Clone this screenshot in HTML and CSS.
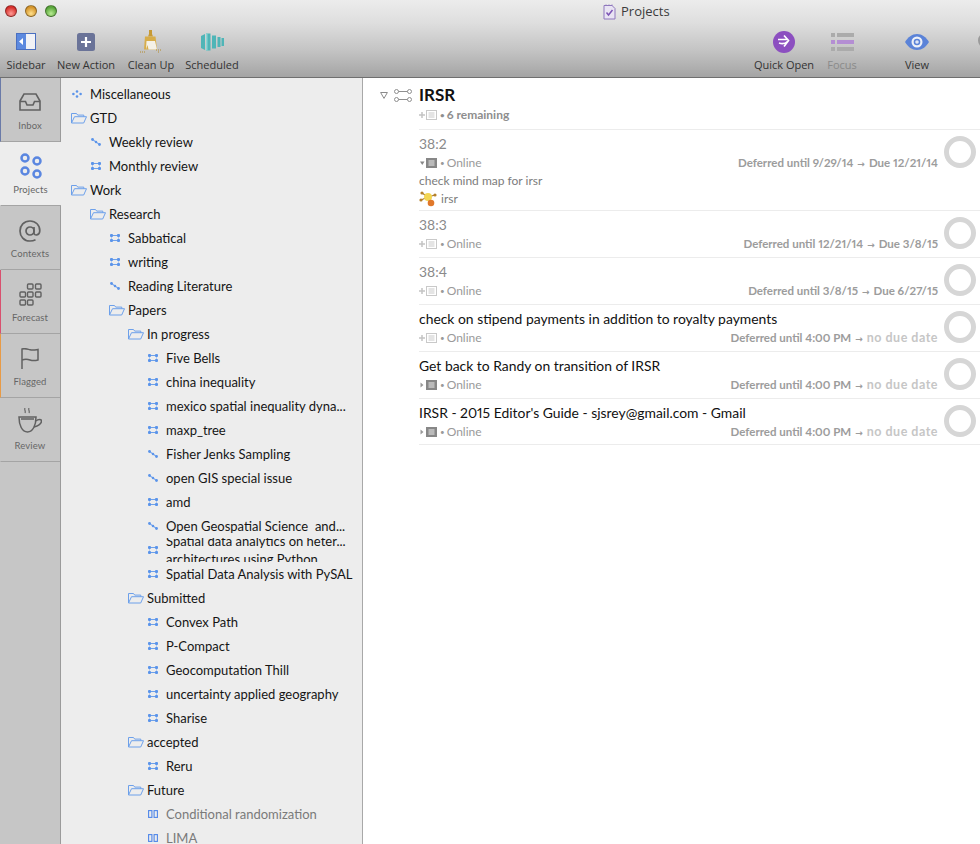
FILE: index.html
```html
<!DOCTYPE html>
<html lang="en">
<head>
<meta charset="utf-8">
<title>Projects</title>
<link rel="stylesheet" href="styles.css">
</head>
<body>
<svg class="defs" width="0" height="0" aria-hidden="true">
  <symbol id="folder" viewBox="0 0 16 12"><path d="M.5 11V1.500h5l1.200 1.600h6.100v1.600M.5 11l3-6.300h12L12.700 11z" fill="none" stroke="#6da0ea" stroke-width="1"/></symbol>
  <symbol id="par" viewBox="0 0 10 8"><path d="M3 1.500h4M3 6.500h4" stroke="#6da0ea" stroke-width="1.200"/><path d="M1.500 2.500v3M8.500 2.500v3" stroke="#a9c6f2" stroke-width=".9"/><g fill="#5b94ea"><rect x="0" y="0" width="3" height="3" rx="1"/><rect x="7" y="0" width="3" height="3" rx="1"/><rect x="0" y="5" width="3" height="3" rx="1"/><rect x="7" y="5" width="3" height="3" rx="1"/></g></symbol>
  <symbol id="seq" viewBox="0 0 10 8"><path d="M1.500 1.500l7 5" stroke="#7fabee" stroke-width="1.200"/><g fill="#5b94ea"><circle cx="1.500" cy="1.500" r="1.400"/><circle cx="5" cy="4" r="1.200"/><circle cx="8.500" cy="6.500" r="1.400"/></g></symbol>
  <symbol id="misc" viewBox="0 0 10 8"><g fill="#5b94ea"><circle cx="1.400" cy="4" r="1.300"/><circle cx="5" cy="1.500" r="1.300"/><circle cx="5" cy="6.500" r="1.300"/><circle cx="8.600" cy="4" r="1.300"/></g></symbol>
  <symbol id="drop" viewBox="0 0 10 8"><rect x=".6" y=".6" width="3.300" height="6.800" fill="none" stroke="#4f86e8" stroke-width="1.100"/><rect x="6.100" y=".6" width="3.300" height="6.800" fill="none" stroke="#4f86e8" stroke-width="1.100"/></symbol>
  <symbol id="note-off" viewBox="0 0 18 10"><path d="M0 5h6M3 2v6" stroke="#c4c4c4" stroke-width="1.500"/><rect x="7.500" y=".5" width="10" height="9" fill="#fff" stroke="#c9c9c9"/><path d="M9.500 3h6M9.500 5h6M9.500 7h6" stroke="#c9c9c9"/></symbol>
  <symbol id="note-open" viewBox="0 0 18 10"><path d="M1 3.500h4.500L3.250 7z" fill="#888"/><rect x="7" width="11" height="10" fill="#878787"/><path d="M9.500 3h6M9.500 5h6M9.500 7h6" stroke="#eee"/></symbol>
  <symbol id="note-closed" viewBox="0 0 18 10"><path d="M1.500 2.500L4.500 5l-3 2.500z" fill="#999"/><rect x="7" width="11" height="10" fill="#878787"/><path d="M9.500 3h6M9.500 5h6M9.500 7h6" stroke="#eee"/></symbol>
</svg>

<header class="chrome">
  <div class="titlebar">
    <div class="lights">
      <span class="light red"></span><span class="light amber"></span><span class="light green"></span>
    </div>
    <div class="wintitle">
      <svg class="doc" width="13" height="16" viewBox="0 0 13 16"><path d="M1 1.500h8l3 3V15H1z" fill="#e9e4f3" stroke="#8f78bd"/><path d="M3 2V.5M6 2V.5M9 2V.5" stroke="#8f78bd"/><path d="M3.500 8.500l2 2.500 4-5" fill="none" stroke="#7d55b5" stroke-width="1.500"/></svg>
      <span>Projects</span>
    </div>
  </div>
  <div class="toolbar">
    <div class="tool w-sidebar">
      <svg width="20" height="17" viewBox="0 0 20 17"><rect x=".5" y=".5" width="19" height="16" fill="#f1f2f6" stroke="#4a6fc0"/><rect x="1" y="1" width="9" height="15" fill="#5c89df"/><path d="M7 5v7L3 8.500z" fill="#fff"/></svg>
      <span>Sidebar</span>
    </div>
    <div class="tool w-new">
      <svg width="18" height="18" viewBox="0 0 18 18"><rect width="18" height="18" rx="2.500" fill="#6a7398"/><path d="M9 4v10M4 9h10" stroke="#fff" stroke-width="2.200"/></svg>
      <span>New Action</span>
    </div>
    <div class="tool w-clean">
      <svg width="22" height="23" viewBox="0 0 22 23"><path d="M9 0h3v4l1 2.500H8l1-2.500z" fill="#c79a34"/><path d="M5 6.500h10.500l1.500 13H4z" fill="#d7ad4a"/><path d="M6.500 11h8.500l2 8.500H8.500L7.500 15 6 19.500z" fill="#f4f1e7"/><path d="M0 22h6M16 20h6M18 22h2" stroke="#b48a2a" stroke-dasharray="1 1"/></svg>
      <span>Clean Up</span>
    </div>
    <div class="tool w-sched">
      <svg width="23" height="18" viewBox="0 0 23 18"><path d="M0 3l4-2v16l-4-2zM5 .5h4.500v17H5zM11 2.500h4v13h-4zM16.500 4h3v10h-3zM20.500 5H23v8h-2.500z" fill="#4fb5b7"/><path d="M5 .5h1.500v17H5z" fill="#8cd6d6"/></svg>
      <span>Scheduled</span>
    </div>
    <div class="tool w-quick">
      <svg width="22" height="22" viewBox="0 0 22 22"><circle cx="11" cy="11" r="11" fill="#8c4fc0"/><path d="M5 8.500h9.500M11 4.500l4.500 5-4.500 6M14.500 10.500c-3 3-5.500 2.500-8.500 1.500" fill="none" stroke="#fff" stroke-width="1.700"/></svg>
      <span>Quick Open</span>
    </div>
    <div class="tool w-focus dim">
      <svg width="23" height="18" viewBox="0 0 23 18"><g fill="#ababab"><rect width="4" height="4"/><rect x="6" width="17" height="4"/><rect y="14" width="4" height="4"/><rect x="6" y="14" width="17" height="4"/></g><g fill="#b48ed3"><rect y="7" width="4" height="4"/><rect x="6" y="7" width="17" height="4"/></g></svg>
      <span>Focus</span>
    </div>
    <div class="tool w-view">
      <svg width="24" height="16" viewBox="0 0 24 16"><path d="M0 8c3-5 7-8 12-8s9 3 12 8c-3 5-7 8-12 8S3 13 0 8z" fill="#5b83d8"/><circle cx="12" cy="8" r="5.500" fill="#eef1f8"/><circle cx="12" cy="8" r="3.300" fill="#5b83d8"/><circle cx="12" cy="8" r="1.800" fill="#dfe6f5"/></svg>
      <span>View</span>
    </div>
    <div class="cutoff"></div>
  </div>
</header>

<div class="body">
  <nav class="tabs">
    <div class="tab t-inbox">
      <svg width="22" height="18" viewBox="0 0 22 18"><path d="M1 8l4-7h12l4 7v9H1zM1 8.500h5.500L8 12h6l1.500-3.500H21" fill="none" stroke="#616161" stroke-width="1.600"/></svg>
      <span>Inbox</span>
    </div>
    <div class="tab active">
      <svg width="22" height="26" viewBox="0 0 22 26"><g fill="none" stroke="#5a86e0" stroke-width="2.500"><circle cx="5" cy="5" r="3.500"/><circle cx="17" cy="8" r="3.500"/><circle cx="5" cy="18" r="3.500"/><circle cx="17" cy="21" r="3.500"/></g></svg>
      <span>Projects</span>
    </div>
    <div class="tab t-contexts">
      <svg width="22" height="22" viewBox="0 0 22 22"><g fill="none" stroke="#616161" stroke-width="1.700"><circle cx="11" cy="11" r="4"/><path d="M15 7v6c0 3 5.500 2.800 5.800-2C21 5 16.500 1 11 1 5 1 1 5.500 1 11s4 10 10 10c2.300 0 4-.5 5.500-1.300"/></g></svg>
      <span>Contexts</span>
    </div>
    <div class="tab t-forecast">
      <svg width="23" height="23" viewBox="0 0 23 23"><g fill="none" stroke="#616161" stroke-width="1.400"><rect x="8.500" y="1" width="5.500" height="5" rx="1"/><rect x="16.500" y="1" width="5.500" height="5" rx="1"/><rect x="1" y="9" width="5.500" height="5" rx="1"/><rect x="8.500" y="9" width="5.500" height="5" rx="1"/><rect x="16.500" y="9" width="5.500" height="5" rx="1"/><rect x="1" y="17" width="5.500" height="5" rx="1"/><rect x="8.500" y="17" width="5.500" height="5" rx="1"/></g></svg>
      <span>Forecast</span>
    </div>
    <div class="tab t-flagged">
      <svg width="18" height="21" viewBox="0 0 18 21"><path d="M1 21V1c3-1 5 0 8 .8s5 .2 8-.3V12c-3 .8-5 1-8 0s-5-1-8 0" fill="none" stroke="#616161" stroke-width="1.500"/></svg>
      <span>Flagged</span>
    </div>
    <div class="tab t-review">
      <svg width="24" height="25" viewBox="0 0 24 25"><g fill="none" stroke="#616161"><path d="M7 0c-1 2 1 3 0 5M11 0c-1 2 1 3 0 5" stroke-width="1.100"/><path d="M1 9h17c0 8-3 15-8.500 15S1 17 1 9zM3 11h13" stroke-width="1.500"/><path d="M18 13c2-2 5.500-2 5.500 0 0 3-4 5-7.500 6" stroke-width="1.500"/></g></svg>
      <span>Review</span>
    </div>
    <div class="tab-rest"></div>
  </nav>

  <aside class="tree">
    <div class="row l0"><svg class="ic small"><use href="#misc"/></svg><span>Miscellaneous</span></div>
    <div class="row l0"><svg class="ic"><use href="#folder"/></svg><span>GTD</span></div>
    <div class="row l1"><svg class="ic small"><use href="#seq"/></svg><span>Weekly review</span></div>
    <div class="row l1"><svg class="ic small"><use href="#par"/></svg><span>Monthly review</span></div>
    <div class="row l0"><svg class="ic"><use href="#folder"/></svg><span>Work</span></div>
    <div class="row l1"><svg class="ic"><use href="#folder"/></svg><span>Research</span></div>
    <div class="row l2"><svg class="ic small"><use href="#par"/></svg><span>Sabbatical</span></div>
    <div class="row l2"><svg class="ic small"><use href="#par"/></svg><span>writing</span></div>
    <div class="row l2"><svg class="ic small"><use href="#seq"/></svg><span>Reading Literature</span></div>
    <div class="row l2"><svg class="ic"><use href="#folder"/></svg><span>Papers</span></div>
    <div class="row l3"><svg class="ic"><use href="#folder"/></svg><span>In progress</span></div>
    <div class="row l4"><svg class="ic small"><use href="#par"/></svg><span>Five Bells</span></div>
    <div class="row l4"><svg class="ic small"><use href="#par"/></svg><span>china inequality</span></div>
    <div class="row l4"><svg class="ic small"><use href="#par"/></svg><span>mexico spatial inequality dyna...</span></div>
    <div class="row l4"><svg class="ic small"><use href="#par"/></svg><span>maxp_tree</span></div>
    <div class="row l4"><svg class="ic small"><use href="#seq"/></svg><span>Fisher Jenks Sampling</span></div>
    <div class="row l4"><svg class="ic small"><use href="#seq"/></svg><span>open GIS special issue</span></div>
    <div class="row l4"><svg class="ic small"><use href="#par"/></svg><span>amd</span></div>
    <div class="row l4"><svg class="ic small"><use href="#seq"/></svg><span>Open Geospatial Science  and...</span></div>
    <div class="row l4"><svg class="ic small"><use href="#par"/></svg><span class="two">Spatial data analytics on heter...<br>architectures using Python</span></div>
    <div class="row l4"><svg class="ic small"><use href="#par"/></svg><span>Spatial Data Analysis with PySAL</span></div>
    <div class="row l3"><svg class="ic"><use href="#folder"/></svg><span>Submitted</span></div>
    <div class="row l4"><svg class="ic small"><use href="#par"/></svg><span>Convex Path</span></div>
    <div class="row l4"><svg class="ic small"><use href="#par"/></svg><span>P-Compact</span></div>
    <div class="row l4"><svg class="ic small"><use href="#par"/></svg><span>Geocomputation Thill</span></div>
    <div class="row l4"><svg class="ic small"><use href="#par"/></svg><span>uncertainty applied geography</span></div>
    <div class="row l4"><svg class="ic small"><use href="#par"/></svg><span>Sharise</span></div>
    <div class="row l3"><svg class="ic"><use href="#folder"/></svg><span>accepted</span></div>
    <div class="row l4"><svg class="ic small"><use href="#par"/></svg><span>Reru</span></div>
    <div class="row l3"><svg class="ic"><use href="#folder"/></svg><span>Future</span></div>
    <div class="row l4 grey"><svg class="ic small"><use href="#drop"/></svg><span>Conditional randomization</span></div>
    <div class="row l4 grey"><svg class="ic small"><use href="#drop"/></svg><span>LIMA</span></div>
  </aside>

  <main class="main">
    <div class="project">
      <svg class="disc" width="8" height="7" viewBox="0 0 8 7"><path d="M.6.500h6.800L4 6.400z" fill="none" stroke="#8a8a8a"/></svg>
      <svg class="proj-ic" width="18" height="13" viewBox="0 0 18 13"><g fill="none" stroke="#8f8f8f"><circle cx="2.500" cy="2.500" r="2"/><circle cx="15.500" cy="2.500" r="2"/><circle cx="2.500" cy="10.500" r="2"/><circle cx="15.500" cy="10.500" r="2"/><path d="M4.500 2.500h9M4.500 10.500h9"/></g></svg>
      <div class="proj-text">
        <h1>IRSR</h1>
        <div class="meta strong"><svg class="note"><use href="#note-off"/></svg><span class="dot">•</span><span>6 remaining</span></div>
      </div>
    </div>

    <div class="action tall">
      <div class="a-text">
        <div class="a-title soft">38:2</div>
        <div class="meta-line"><div class="meta"><svg class="note"><use href="#note-open"/></svg><span class="dot">•</span><span>Online</span></div><div class="dates">Deferred until 9/29/14<i>→</i>Due 12/21/14</div></div>
        <div class="a-note">check mind map for irsr</div>
        <div class="a-attach">
          <svg width="18" height="16" viewBox="0 0 18 16"><path d="M9 6L3 2M9 6l7-2M9 6L2 9M9 6l2 6" stroke="#a5752a" stroke-width="1.100"/><circle cx="3" cy="2" r="1.600" fill="#b5802a"/><circle cx="16" cy="4" r="1.600" fill="#b5802a"/><circle cx="2" cy="9" r="1.600" fill="#b5802a"/><circle cx="9" cy="6" r="4" fill="#f3d653"/><circle cx="12" cy="12" r="3.300" fill="#e0782a"/></svg>
          <span>irsr</span>
        </div>
      </div>
      <span class="check"></span>
    </div>

    <div class="action">
      <div class="a-text">
        <div class="a-title soft">38:3</div>
        <div class="meta-line"><div class="meta"><svg class="note"><use href="#note-off"/></svg><span class="dot">•</span><span>Online</span></div><div class="dates">Deferred until 12/21/14<i>→</i>Due 3/8/15</div></div>
      </div>
      <span class="check"></span>
    </div>

    <div class="action">
      <div class="a-text">
        <div class="a-title soft">38:4</div>
        <div class="meta-line"><div class="meta"><svg class="note"><use href="#note-off"/></svg><span class="dot">•</span><span>Online</span></div><div class="dates">Deferred until 3/8/15<i>→</i>Due 6/27/15</div></div>
      </div>
      <span class="check"></span>
    </div>

    <div class="action">
      <div class="a-text">
        <div class="a-title">check on stipend payments in addition to royalty payments</div>
        <div class="meta-line"><div class="meta"><svg class="note"><use href="#note-off"/></svg><span class="dot">•</span><span>Online</span></div><div class="dates">Deferred until 4:00 PM<i>→</i><em>no due date</em></div></div>
      </div>
      <span class="check"></span>
    </div>

    <div class="action">
      <div class="a-text">
        <div class="a-title">Get back to Randy on transition of IRSR</div>
        <div class="meta-line"><div class="meta"><svg class="note"><use href="#note-closed"/></svg><span class="dot">•</span><span>Online</span></div><div class="dates">Deferred until 4:00 PM<i>→</i><em>no due date</em></div></div>
      </div>
      <span class="check"></span>
    </div>

    <div class="action">
      <div class="a-text">
        <div class="a-title">IRSR - 2015 Editor's Guide - sjsrey@gmail.com - Gmail</div>
        <div class="meta-line"><div class="meta"><svg class="note"><use href="#note-closed"/></svg><span class="dot">•</span><span>Online</span></div><div class="dates">Deferred until 4:00 PM<i>→</i><em>no due date</em></div></div>
      </div>
      <span class="check"></span>
    </div>
  </main>
</div>
```

FILE: styles.css
```css
* { box-sizing: border-box; }
html, body { margin: 0; height: 100%; overflow: hidden; }
body {
  width: 980px; height: 844px; display: flex; flex-direction: column;
  font-family: "Lato", "Liberation Sans", sans-serif; background: #fff; color: #111;
  font-variant-numeric: proportional-nums;
}
.defs { position: absolute; }

.chrome {
  height: 78px; flex: none;
  background: linear-gradient(#ececec 0, #dedede 30%, #c4c4c4 65%, #a4a4a4 100%);
  border-bottom: 1px solid #6f6f6f;
  font-family: "Open Sans", "Liberation Sans", sans-serif;
}
.titlebar { height: 23px; position: relative; display: flex; align-items: center; padding-left: 603px; }
.lights { position: absolute; left: 5px; top: 5px; display: flex; gap: 8px; }
.light { width: 12px; height: 12px; border-radius: 50%; border: 1px solid rgba(0,0,0,.35); }
.light.red { background: radial-gradient(circle at 50% 75%, #ff9a94, #d62f2b 70%); }
.light.amber { background: radial-gradient(circle at 50% 75%, #ffe08c, #d4942a 70%); }
.light.green { background: radial-gradient(circle at 50% 75%, #b8ec92, #58a53a 70%); }
.wintitle { display: flex; align-items: center; gap: 5px; font-size: 13px; line-height: 16px; color: #3c3c3c; }
.wintitle span { margin-top: -1px; }
.toolbar { display: flex; height: 54px; align-items: flex-start; }
.tool { height: 54px; display: flex; flex-direction: column; align-items: center; padding-bottom: 5px; font-size: 11px; color: #333; white-space: nowrap; flex: none; }
.tool span { line-height: 14px; margin-top: auto; }
.tool svg { margin-top: 10px; }
.dim span { color: #8a8a8a; }
.w-sidebar { width: 52px; }
.w-new { width: 68px; }
.w-clean { width: 62px; }
.w-clean svg { margin-top: 7px; }
.w-sched { width: 60px; }
.w-quick { width: 68px; margin-left: 508px; }
.w-quick svg { margin-top: 8px; }
.w-focus { width: 48px; }
.w-view { width: 102px; }
.w-view svg { margin-top: 11px; }
.cutoff { width: 14px; height: 15px; margin: 10px 0 0 10px; border: 2px solid #9a9a9a; border-radius: 50%; background: #d8d8d8; flex: none; }

.body { flex: 1; display: flex; min-height: 0; }

.tabs { width: 61px; flex: none; display: flex; flex-direction: column; background: #c6c6c6; border-right: 1px solid #9b9b9b; }
.tab {
  height: 64px; flex: none; display: flex; flex-direction: column; align-items: center;
  padding: 11px 1px 0 0; background: #c6c6c6; border-bottom: 1px solid #a4a4a4;
  font-size: 9.500px; color: #666; letter-spacing: .1px; border-left: 1px solid transparent;
}
.tab span { margin-top: auto; margin-bottom: 9px; line-height: 12px; }
.t-inbox { padding-top: 15px; border-left-color: #6a7aa8; }
.t-contexts { padding-top: 14px; }
.t-forecast { padding-top: 13px; border-left-color: #d9506e; }
.t-flagged { padding-top: 14px; border-left-color: #e89a45; }
.t-review { padding-top: 10px; }
.tab.active { background: #ededed; margin-right: -1px; position: relative; border-bottom-color: #a4a4a4; }
.tab-rest { flex: 1; }

.tree { width: 302px; flex: none; background: #ededed; border-right: 1px solid #a8a8a8; padding-top: 4px; overflow: hidden; }
.row { height: 24px; display: flex; align-items: center; font-size: 13px; color: #151515; overflow: hidden; white-space: pre; }
.row .two { line-height: 18px; }
.row.grey { color: #7a7a7a; }
.ic { width: 16px; height: 12px; flex: none; margin-right: 3px; }
.ic.small { width: 10px; height: 8px; margin-left: 1px; margin-right: 8px; }
.l0 { padding-left: 10px; }
.l1 { padding-left: 29px; }
.l2 { padding-left: 48px; }
.l3 { padding-left: 67px; }
.l4 { padding-left: 86px; }

.main { flex: 1; min-width: 0; padding-left: 16px; }
.project { height: 51px; display: flex; align-items: flex-start; padding-top: 7px; position: relative; }
.disc { position: absolute; left: 1px; top: 14px; }
.proj-ic { position: absolute; left: 15px; top: 11px; }
.proj-text { margin-left: 40px; flex: 1; }
h1 { margin: 0; font-size: 17px; line-height: 20px; font-weight: 700; color: #111; }
.meta { display: flex; align-items: center; font-size: 12px; color: #9a9a9a; line-height: 14px; margin-top: -1px; }
.meta.strong { font-weight: 700; margin-top: 3px; color: #8e8e8e; }
.note { width: 18px; height: 10px; flex: none; }
.dot { font-size: 8px; margin: 0 2px 0 3px; }

.action { margin-left: 40px; border-top: 1px solid #ececec; height: 47px; display: flex; padding-right: 4px; }
.action.tall { height: 81px; }
.action:last-child { border-bottom: 1px solid #ececec; }
.a-text { flex: 1; min-width: 0; padding-top: 5px; }
.a-title { font-size: 13.900px; line-height: 18px; color: #111; }
.a-title.soft { color: #8a8a8a; }
.meta-line { display: flex; justify-content: space-between; margin-top: 3px; padding-right: 6px; }
.dates { font-size: 11.500px; font-weight: 700; color: #9c9c9c; line-height: 14px; }
.dates i { font-style: normal; font-size: 9px; margin: 0 4px; font-family: "DejaVu Sans", sans-serif; }
.dates em { font-style: normal; font-size: 12.500px; letter-spacing: .5px; color: #c6c6c6; }
.a-note { font-size: 12px; color: #7c7c7c; line-height: 14px; margin-top: 3px; }
.a-attach { display: flex; align-items: center; gap: 4px; font-size: 12px; color: #7c7c7c; line-height: 16px; margin-top: 3px; }
.check { width: 32px; height: 32px; border-radius: 50%; border: 5px solid #d6d6d6; flex: none; margin-top: 6px; background: #fff; }
```
